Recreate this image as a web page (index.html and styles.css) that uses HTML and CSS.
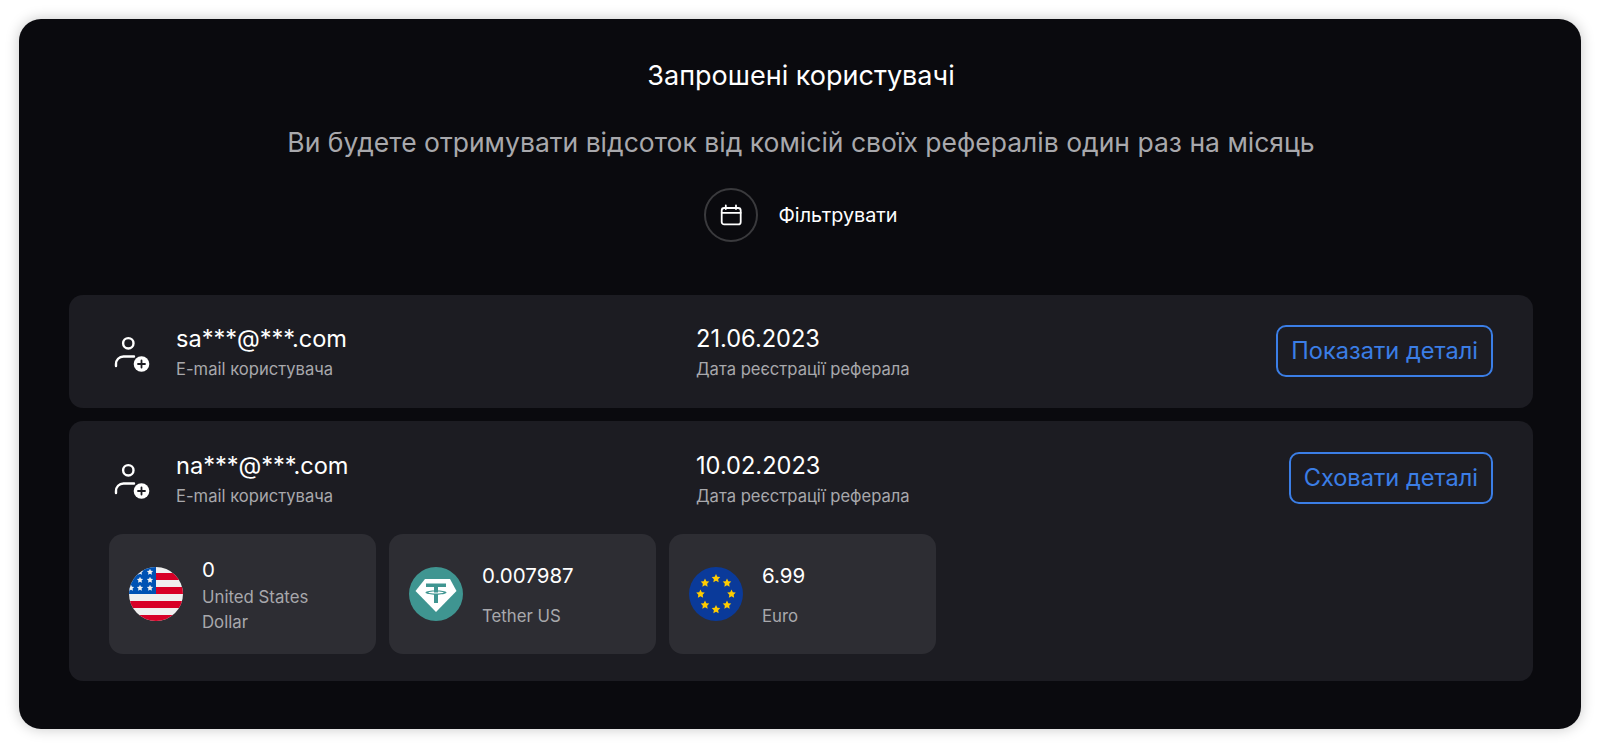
FILE: index.html
```html
<!DOCTYPE html>
<html lang="uk">
<head>
<meta charset="utf-8">
<title>Запрошені користувачі</title>
<link rel="stylesheet" href="styles.css">
</head>
<body>
<svg class="defs" width="0" height="0" aria-hidden="true">
  <defs>
    <polygon id="star" points="0,-1 0.294,-0.405 0.951,-0.309 0.476,0.155 0.588,0.809 0,0.5 -0.588,0.809 -0.476,0.155 -0.951,-0.309 -0.294,-0.405"/>
    <g id="user-add">
      <circle cx="17.300" cy="11.300" r="5.200" fill="none" stroke="#fff" stroke-width="2.400"/>
      <path d="M5 34v-2c0-4 3-7.500 7.500-7.500H23" fill="none" stroke="#fff" stroke-width="2.400" stroke-linecap="round"/>
      <circle cx="30.500" cy="32" r="7.800" fill="#fff"/>
      <path d="M27 32h7M30.500 28.500v7" stroke="#1c1c22" stroke-width="1.800" stroke-linecap="round"/>
    </g>
  </defs>
</svg>
<main class="panel">
  <h1 class="title">Запрошені користувачі</h1>
  <p class="subtitle">Ви будете отримувати відсоток від комісій своїх рефералів один раз на місяць</p>
  <div class="filter">
    <span class="filter-icon">
      <svg width="24" height="24" viewBox="0 0 24 24" fill="none" stroke="#fff" stroke-width="1.800" stroke-linecap="round" stroke-linejoin="round">
        <rect x="2.700" y="5" width="19" height="16.400" rx="2.500"/>
        <path d="M2.700 9.800h19M6.800 2.500v3.500M17 2.500v3.500"/>
      </svg>
    </span>
    <span class="filter-label">Фільтрувати</span>
  </div>

  <section class="row row-first">
    <div class="row-head">
      <div class="user">
        <svg class="user-icon" width="42" height="42" viewBox="0 0 42 42"><use href="#user-add"/></svg>
        <div>
          <div class="value">sa***@***.com</div>
          <div class="caption">E-mail користувача</div>
        </div>
      </div>
      <div>
        <div class="value">21.06.2023</div>
        <div class="caption">Дата реєстрації реферала</div>
      </div>
      <button class="btn" type="button">Показати деталі</button>
    </div>
  </section>

  <section class="row row-second">
    <div class="row-head">
      <div class="user">
        <svg class="user-icon" width="42" height="42" viewBox="0 0 42 42"><use href="#user-add"/></svg>
        <div>
          <div class="value">na***@***.com</div>
          <div class="caption">E-mail користувача</div>
        </div>
      </div>
      <div>
        <div class="value">10.02.2023</div>
        <div class="caption">Дата реєстрації реферала</div>
      </div>
      <button class="btn" type="button">Сховати деталі</button>
    </div>
    <div class="tiles">
      <article class="tile">
        <svg class="coin" width="54" height="54" viewBox="0 0 54 54">
          <clipPath id="usclip"><circle cx="27" cy="27" r="27"/></clipPath>
          <g clip-path="url(#usclip)">
            <rect width="54" height="54" fill="#f0f0f0"/>
            <rect x="27" y="6" width="27" height="7" fill="#d80027"/>
            <rect x="27" y="20" width="27" height="7" fill="#d80027"/>
            <rect x="0" y="34" width="54" height="7" fill="#d80027"/>
            <rect x="0" y="48" width="54" height="6" fill="#d80027"/>
            <rect x="0" y="0" width="27" height="27" fill="#0052b4"/>
            <g fill="#f0f0f0">
              <use href="#star" transform="translate(11 5) scale(3.300)"/>
              <use href="#star" transform="translate(21 5) scale(3.300)"/>
              <use href="#star" transform="translate(11 13) scale(3.300)"/>
              <use href="#star" transform="translate(21 13) scale(3.300)"/>
              <use href="#star" transform="translate(2 21) scale(3.300)"/>
              <use href="#star" transform="translate(11 21) scale(3.300)"/>
              <use href="#star" transform="translate(21 21) scale(3.300)"/>
            </g>
          </g>
        </svg>
        <div class="tile-text">
          <div class="tile-value">0</div>
          <div class="tile-label">United States Dollar</div>
        </div>
      </article>
      <article class="tile">
        <svg class="coin" width="54" height="54" viewBox="0 0 54 54">
          <circle cx="27" cy="27" r="27" fill="#3f9591"/>
          <path d="M16 12h25l6.500 12L27 45 6.500 24z" fill="#fff"/>
          <path d="M17 16.500h20v3.500h-8v3.500c5 .2 8.500 1 8.500 2.100s-3.500 1.900-8.500 2.100V36h-4v-8.300c-5-.2-8.500-1-8.500-2.100s3.500-1.900 8.500-2.100V20h-8z" fill="#3f9591"/>
          <path d="M19 25.600c1.600.6 4.500 1 8 1s6.400-.4 8-1c-1.600-.6-4.500-.9-6-1v1h-4v-1c-1.500.1-4.400.4-6 1z" fill="#fff"/>
        </svg>
        <div class="tile-text">
          <div class="tile-value">0.007987</div>
          <div class="tile-label">Tether US</div>
        </div>
      </article>
      <article class="tile">
        <svg class="coin" width="54" height="54" viewBox="0 0 54 54">
          <circle cx="27" cy="27" r="27" fill="#0a3a9a"/>
          <g fill="#ffcc00">
            <use href="#star" transform="translate(27 11.500) scale(4.500)"/>
            <use href="#star" transform="translate(38 16) scale(4.500)"/>
            <use href="#star" transform="translate(42.500 27) scale(4.500)"/>
            <use href="#star" transform="translate(38 38) scale(4.500)"/>
            <use href="#star" transform="translate(27 42.500) scale(4.500)"/>
            <use href="#star" transform="translate(16 38) scale(4.500)"/>
            <use href="#star" transform="translate(11.500 27) scale(4.500)"/>
            <use href="#star" transform="translate(16 16) scale(4.500)"/>
          </g>
        </svg>
        <div class="tile-text">
          <div class="tile-value">6.99</div>
          <div class="tile-label">Euro</div>
        </div>
      </article>
    </div>
  </section>
</main>
</body>
</html>
```
FILE: styles.css
```css
* { box-sizing: border-box; }
html, body { margin: 0; padding: 0; height: 100%; background: #fff; overflow: hidden; }
body { padding: 19px; font-family: Inter, "Noto Sans", sans-serif; color: #fff; }
.defs { position: absolute; }
.panel {
  height: 710px;
  padding: 39px 48px 0 50px;
  background: #0a0a0e;
  border-radius: 22px;
  box-shadow: 0 0 14px rgba(0, 0, 0, 0.22);
}
.title { margin: 0; font-size: 27px; line-height: 36px; font-weight: 400; text-align: center; }
.subtitle { margin: 30px 0 0; font-size: 26.500px; line-height: 36px; font-weight: 400; text-align: center; color: #a8a8ac; }
.filter { margin-top: 28px; display: flex; justify-content: center; align-items: center; gap: 20px; }
.filter-icon {
  width: 54px; height: 54px; border: 2px solid #3a3a3d; border-radius: 50%;
  display: flex; align-items: center; justify-content: center;
}
.filter-label { font-size: 19.800px; font-weight: 400; }
.row { background: #1c1c22; border-radius: 14px; padding: 30px 40px; }
.row-first { margin-top: 53px; height: 113px; }
.row-second { margin-top: 13px; height: 260px; padding: 31px 40px 27px; }
.row-head { display: grid; grid-template-columns: 587px 1fr auto; align-items: start; }
.user { display: flex; align-items: center; gap: 23px; }
.user-icon { flex: none; margin-left: 2px; }
.value { font-size: 23.600px; line-height: 28px; font-weight: 400; }
.caption { font-size: 16.600px; line-height: 24px; margin-top: 4px; color: #a8a8ac; }
.btn {
  height: 52px; padding: 0 13px; background: transparent;
  border: 2px solid #3b7ee6; border-radius: 10px;
  color: #3b7ee6; font: 400 23.600px/1 Inter, "Noto Sans", sans-serif;
}
.tiles { margin-top: 26px; display: flex; gap: 13px; }
.tile {
  width: 267px; height: 120px; padding: 0 20px;
  background: #2d2d33; border-radius: 14px;
  display: flex; align-items: center; gap: 19px;
}
.coin { flex: none; }
.tile-text { max-width: 130px; min-height: 70px; padding-top: 4px; display: flex; flex-direction: column; justify-content: space-between; gap: 3px; }
.tile-value { font-size: 20.500px; line-height: 25px; font-weight: 400; }
.tile-label { font-size: 16.800px; line-height: 25px; color: #a8a8ac; }
```
